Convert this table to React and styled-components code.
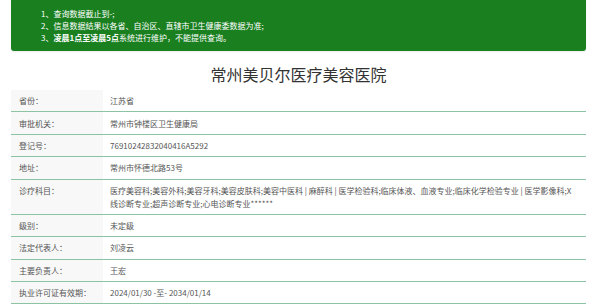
import React from "react";
import styled, { createGlobalStyle } from "styled-components";

const Global = createGlobalStyle`
  html, body { margin: 0; padding: 0; background: #fff; }
  body { font-family: "Noto Sans CJK SC", "Noto Sans", sans-serif; }
`;

const Page = styled.div`
  width: 575px;
  margin: 0 14px 0 11px;
`;

const Notice = styled.div`
  background: #1a801f;
  color: #fff;
  border-radius: 0 0 3px 3px;
  padding: 8px 0 7px 30px;
  font-size: 8px;
  line-height: 12px;
  box-shadow: 0 1px 2px rgba(0,0,0,0.08);
`;

const NoticeLine = styled.div`
  white-space: nowrap;
`;

const Strong = styled.b`
  font-weight: 700;
`;

const Title = styled.h1`
  margin: 11px 0 4px;
  text-align: center;
  font-size: 16px;
  line-height: 24px;
  font-weight: 400;
  color: #333;
`;

const Table = styled.div`
  display: flex;
  flex-direction: column;
`;

const Row = styled.div`
  display: grid;
  grid-template-columns: 92px 1fr;
  border-bottom: 1px solid #8cc3a3;
`;

const Label = styled.div`
  background: #f8f8f8;
  color: #555;
  font-size: 8px;
  line-height: 13px;
  padding: 4.2px 0 4.2px 8px;
`;

const Value = styled.div`
  color: #555;
  font-size: 8px;
  line-height: 13px;
  padding: 4.2px 8px 4.2px 7px;
`;

const rows = [
  ["省份：", "江苏省"],
  ["审批机关：", "常州市钟楼区卫生健康局"],
  ["登记号：", "76910242832040416A5292"],
  ["地址：", "常州市怀德北路53号"],
  [
    "诊疗科目：",
    "医疗美容科;美容外科;美容牙科;美容皮肤科;美容中医科 | 麻醉科 | 医学检验科;临床体液、血液专业;临床化学检验专业 | 医学影像科;X线诊断专业;超声诊断专业;心电诊断专业******",
  ],
  ["级别：", "未定级"],
  ["法定代表人：", "刘凌云"],
  ["主要负责人：", "王宏"],
  ["执业许可证有效期：", "2024/01/30 -至- 2034/01/14"],
];

export default function App() {
  return (
    <Page>
      <Global />
      <Notice>
        <NoticeLine>1、查询数据截止到-;</NoticeLine>
        <NoticeLine>2、信息数据结果以各省、自治区、直辖市卫生健康委数据为准;</NoticeLine>
        <NoticeLine>
          3、<Strong>凌晨1点至凌晨5点</Strong>系统进行维护，不能提供查询。
        </NoticeLine>
      </Notice>
      <Title>常州美贝尔医疗美容医院</Title>
      <Table>
        {rows.map(([k, v]) => (
          <Row key={k}>
            <Label>{k}</Label>
            <Value>{v}</Value>
          </Row>
        ))}
      </Table>
    </Page>
  );
}
